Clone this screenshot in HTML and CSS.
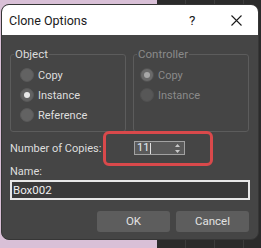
FILE: index.html
```html
<!DOCTYPE html>
<html lang="en">
<head>
    <meta charset="UTF-8">
    <title>Clone Options</title>
    <link rel="stylesheet" href="styles.css">
</head>
<body>
    <div class="dialog">
        <!-- title bar -->
        <div class="titlebar">
            <span class="title">Clone Options</span>
            <span class="help">?</span>
            <span class="close">
                <svg width="11" height="11" viewBox="0 0 11 11"><path d="M0.5 0.5L10.5 10.5M10.5 0.5L0.5 10.5" stroke="#1b1b1b" stroke-width="1.1" fill="none"/></svg>
            </span>
        </div>

        <div class="content">
            <div class="groups">
                <fieldset class="group object">
                    <legend>Object</legend>
                    <div class="radio"><span class="dot"></span>Copy</div>
                    <div class="radio checked"><span class="dot"></span>Instance</div>
                    <div class="radio"><span class="dot"></span>Reference</div>
                </fieldset>
                <fieldset class="group disabled">
                    <legend>Controller</legend>
                    <div class="radio checked"><span class="dot"></span>Copy</div>
                    <div class="radio"><span class="dot"></span>Instance</div>
                </fieldset>
            </div>

            <div class="copies-row">
                <span class="copies-label">Number of Copies:</span>
                <div class="spinner">
                    <span class="value">11</span><span class="caret"></span>
                    <svg class="arrows" width="5" height="9" viewBox="0 0 5 9"><path d="M2.5 0L5 3H0Z M0 6H5L2.5 9Z" fill="#c8c8c8"/></svg>
                </div>
                <div class="highlight"></div>
            </div>

            <div class="name-label">Name:</div>
            <div class="name-input">Box002</div>

            <div class="buttons">
                <div class="btn">OK</div>
                <div class="btn">Cancel</div>
            </div>
        </div>
    </div>
</body>
</html>
```

FILE: styles.css
```css
html, body {
    margin: 0;
    height: 248px;
}
body {
    width: 261px;
    overflow: hidden;
    font-family: Roboto, "Liberation Sans", sans-serif;
    font-size: 11px;
    /* desktop behind: pink on the left, dark viewport grid on the right */
    background:
        linear-gradient(to right, transparent 185px, #3c3c3c 185px, #3c3c3c 186px, transparent 186px),
        linear-gradient(to right, transparent 214px, #3c3c3c 214px, #3c3c3c 215px, transparent 215px),
        linear-gradient(to right, transparent 243px, #3c3c3c 243px, #3c3c3c 244px, transparent 244px),
        linear-gradient(to right, #d9c0d7 157px, #2b2b2b 157px);
}

.dialog {
    margin: 4px 0 0 1px;
    width: 258px;
    height: 236px;
    box-sizing: border-box;
    border: 1px solid #363636;
    border-radius: 8px;
    overflow: hidden;
    background-color: #454545;
    display: flex;
    flex-direction: column;
}

/* title bar */
.titlebar {
    height: 30px;
    flex: none;
    background-color: #ffffff;
    display: flex;
    align-items: center;
    padding-left: 7px;
    color: #1a1a1a;
}
.title {
    flex: 1;
    font-size: 12.5px;
}
.help {
    font-size: 13.5px;
    width: 7px;
    margin-right: 35px;
}
.close {
    display: flex;
    margin-right: 16px;
}

.content {
    flex: 1;
    padding: 12px 8px 0 8px;
    color: #dedede;
}

/* group boxes */
.groups {
    display: flex;
    gap: 7px;
}
.group {
    margin: 0;
    padding: 4px 0 0 6px;
    min-width: 0;
    width: 116px;
    height: 85px;
    box-sizing: border-box;
    border: 1px solid #5c5c5c;
    border-radius: 3px;
}
.group.object {
    padding-left: 9px;
}
.group legend {
    padding: 0 1px;
    margin-left: -3px;
    line-height: 14px;
    font-size: 11.5px;
    color: #dcdcdc;
}
.group.object legend {
    margin-left: -6px;
}
.group.disabled legend,
.group.disabled .radio {
    color: #8a8a8a;
}

.radio {
    height: 20px;
    display: flex;
    align-items: center;
    gap: 4px;
    font-size: 11px;
}
.dot {
    width: 14px;
    height: 14px;
    flex: none;
    border-radius: 50%;
    background-color: #626262;
    box-sizing: border-box;
    border: 1px solid #585858;
    display: flex;
    align-items: center;
    justify-content: center;
}
.radio.checked .dot::after {
    content: "";
    width: 6px;
    height: 6px;
    border-radius: 50%;
    background-color: #e8e8e8;
}
.disabled .dot {
    background-color: #575757;
    border-color: #505050;
}
.disabled .radio.checked .dot {
    background-color: #6a6a6a;
}
.disabled .radio.checked .dot::after {
    background-color: #a8a8a8;
}

/* number of copies */
.copies-row {
    position: relative;
    margin-top: 9px;
    height: 14px;
    display: flex;
    align-items: center;
}
.copies-label {
    width: 124px;
    flex: none;
}
.spinner {
    width: 51px;
    height: 14px;
    box-sizing: border-box;
    border: 1px solid #a2a2a2;
    background-color: #5a5a5a;
    display: flex;
    align-items: center;
    padding-left: 2px;
    color: #e4ecf6;
    line-height: 12px;
}
.caret {
    width: 1px;
    height: 11px;
    margin-left: 1px;
    background-color: #e0e0e0;
}
.arrows {
    margin-left: auto;
    margin-right: 4px;
}
.highlight {
    position: absolute;
    left: 93px;
    top: -10px;
    width: 110px;
    height: 35px;
    box-sizing: border-box;
    border: 3px solid #d9494b;
    border-radius: 6px;
}

/* name */
.name-label {
    margin-top: 10px;
    line-height: 14px;
}
.name-input {
    margin-top: 1px;
    height: 20px;
    box-sizing: border-box;
    border: 2px solid #e8e8e8;
    background-color: #3a3a3a;
    color: #f0f0f0;
    padding-left: 1px;
    line-height: 16px;
    font-size: 11.5px;
}

/* buttons */
.buttons {
    margin-top: 11px;
    display: flex;
    justify-content: flex-end;
    gap: 6px;
    padding-right: 1px;
}
.btn {
    width: 73px;
    height: 21px;
    line-height: 21px;
    text-align: center;
    border-radius: 3px;
    background-color: #5d5d5d;
    color: #e2e2e2;
    font-size: 11.5px;
}
```
